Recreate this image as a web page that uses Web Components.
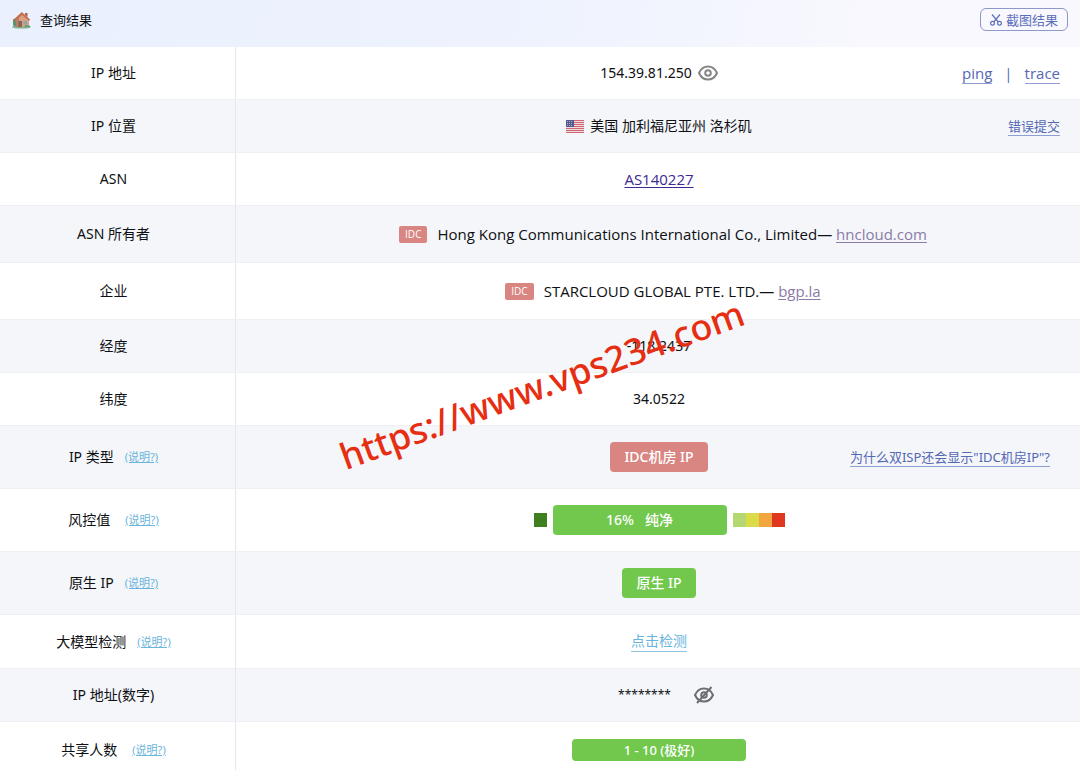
<!DOCTYPE html>
<html lang="zh-CN">
<head>
<meta charset="utf-8">
<meta name="viewport" content="width=device-width, initial-scale=1">
<title>查询结果</title>
<style>
  body { margin: 0; background: #fff; color: #0e1013; font: 15px/22px "Noto Sans", "Noto Sans CJK SC", sans-serif; }
</style>
</head>
<body>
<result-page></result-page>

<template id="t-page">
  <style>
    :host { display: block; position: relative; height: 100vh; overflow: hidden; }
  </style>
  <result-header></result-header>
  <result-table></result-table>
  <water-mark>https://www.vps234.com</water-mark>
</template>

<template id="t-header">
  <style>
    :host { display: flex; align-items: center; justify-content: space-between; height: 47px; box-sizing: border-box; padding: 0 12px 8px; background: linear-gradient(100deg, #ebf0fe 0%, #edf2fe 45%, #f8f8fe 80%, #f9f8fe 100%); }
    h1 { display: flex; align-items: center; gap: 9px; margin: 0; font-size: 13px; font-weight: 400; line-height: 20px; }
    svg { display: block; }
    button { display: flex; align-items: center; gap: 4px; height: 23px; padding: 0 9px; border: 1px solid #8d99c9; border-radius: 6px; background: transparent; color: #5c6fba; font: inherit; font-size: 13px; line-height: 20px; }
  </style>
  <h1>
    <svg width="19" height="18" viewBox="0 0 19 18" aria-hidden="true">
      <ellipse cx="9.500" cy="16" rx="9.500" ry="1.600" fill="#7fb08c"/>
      <path d="M1 14V8.500a2.500 2.500 0 0 1 4 0V15H2z" fill="#5f8f6b"/>
      <path d="M4 8 10.500 2.500 17 8v8H4z" fill="#d9a184"/>
      <path d="M4 8 7 5.500V16H4z" fill="#b97f68"/>
      <path d="M13 2h2.500v4L13 4z" fill="#a9624d"/>
      <path d="M1.500 8.700 9.800 1 18.300 8.700l-1.300 1L10.200 4 3 10z" fill="#c4704f"/>
      <path d="M6.500 10H10v6H6.500z" fill="#86664f"/>
      <path d="M11.500 10H15v3.500h-3.500z" fill="#8fa5a8"/>
      <path d="M12.500 16c0-2 2-2.500 3.300-1.500 1.500-.6 2.200.5 2.200 1.500z" fill="#5f9f74"/>
    </svg>
    查询结果
  </h1>
  <button type="button">
    <svg width="12" height="12" viewBox="0 0 12 12" fill="none" stroke="currentColor" stroke-width="1.200" aria-hidden="true">
      <path d="M2 .5 8.300 8M10 .5 3.700 8"/><circle cx="2.500" cy="9.300" r="1.900"/><circle cx="9.500" cy="9.300" r="1.900"/>
    </svg>
    截图结果
  </button>
</template>

<template id="t-table">
  <style>
    :host { display: block; }
    table { width: 100%; border-collapse: separate; border-spacing: 0; table-layout: fixed; }
    .c-label { width: 236px; }
    tr { height: 53px; }
    tr.t { height: 54px; }
    tr.m { height: 57px; }
    tr.l { height: 63px; }
    tr:nth-child(even) { background: #f4f6fa; }
    th, td { box-sizing: border-box; padding: 0; font-weight: 400; border-bottom: 1px solid #eef0f4; text-align: center; white-space: nowrap; }
    th { padding-right: 8px; border-right: 1px solid #e5e7ec; }
    .label { display: flex; align-items: center; justify-content: center; gap: 11px; font-size: 14px; }
    .label.wide { gap: 15px; }
    .latin { font-family: "Open Sans", sans-serif; line-height: 20px; }
    .as { color: #3a2a94; }
    .site { color: #8b7ba6; }
    a { text-underline-offset: 2px; }
    .side { color: #5468b4; text-decoration: none; border-bottom: 1px solid #8f9fd4; line-height: 20px; display: block; }
    .links { display: flex; gap: 12px; }
    .small { font-size: 13px; line-height: 18px; }
    .check { color: #68b4da; font-size: 14px; text-decoration: none; border-bottom: 1px solid #8cc4e2; display: block; line-height: 20px; }
    .cn { font-size: 14px; }
    .sep { color: #5468b4; }
    .stars { margin: 0 17px 0 14px; font-size: 12px; }
  </style>
  <table aria-label="查询结果">
    <colgroup><col class="c-label"><col></colgroup>
    <tbody>
      <tr><th scope="row"><div class="label">IP 地址</div></th>
        <td><value-line><span class="cn">154.39.81.250</span><eye-icon></eye-icon>
          <span slot="side" class="links latin"><a class="side" href="#ping">ping</a><span class="sep">|</span><a class="side" href="#trace">trace</a></span></value-line></td></tr>
      <tr><th scope="row"><div class="label">IP 位置</div></th>
        <td><value-line><us-flag></us-flag><span class="cn">美国 加利福尼亚州 洛杉矶</span>
          <a slot="side" class="side small" href="#report">错误提交</a></value-line></td></tr>
      <tr><th scope="row"><div class="label">ASN</div></th>
        <td><value-line><a class="as latin" href="#as">AS140227</a></value-line></td></tr>
      <tr class="m"><th scope="row"><div class="label">ASN 所有者</div></th>
        <td><value-line><idc-tag>IDC</idc-tag><span class="latin">Hong Kong Communications International Co., Limited— <a class="site" href="#hncloud">hncloud.com</a></span></value-line></td></tr>
      <tr class="m"><th scope="row"><div class="label">企业</div></th>
        <td><value-line><idc-tag>IDC</idc-tag><span class="latin">STARCLOUD GLOBAL PTE. LTD.— <a class="site" href="#bgp">bgp.la</a></span></value-line></td></tr>
      <tr><th scope="row"><div class="label">经度</div></th>
        <td><value-line><span class="cn">-118.2437</span></value-line></td></tr>
      <tr><th scope="row"><div class="label">纬度</div></th>
        <td><value-line><span class="cn">34.0522</span></value-line></td></tr>
      <tr class="l"><th scope="row"><div class="label">IP 类型 <help-link></help-link></div></th>
        <td><value-line inset><status-badge tone="red">IDC机房 IP</status-badge>
          <a slot="side" class="side small" href="#dual">为什么双ISP还会显示"IDC机房IP"?</a></value-line></td></tr>
      <tr class="l"><th scope="row"><div class="label wide">风控值 <help-link></help-link></div></th>
        <td><value-line><risk-scale>16%&nbsp;&nbsp; 纯净</risk-scale></value-line></td></tr>
      <tr class="l"><th scope="row"><div class="label">原生 IP <help-link></help-link></div></th>
        <td><value-line><status-badge>原生 IP</status-badge></value-line></td></tr>
      <tr class="t"><th scope="row"><div class="label">大模型检测 <help-link></help-link></div></th>
        <td><value-line><a class="check" href="#check">点击检测</a></value-line></td></tr>
      <tr><th scope="row"><div class="label">IP 地址(数字)</div></th>
        <td><value-line><span class="stars">********</span><eye-icon off></eye-icon></value-line></td></tr>
      <tr class="m"><th scope="row"><div class="label wide">共享人数 <help-link></help-link></div></th>
        <td><value-line><status-badge wide slim>1 - 10 (极好)</status-badge></value-line></td></tr>
    </tbody>
  </table>
</template>

<template id="t-value">
  <style>
    :host { display: grid; grid-template-columns: 1fr auto 1fr; align-items: center; padding: 0 20px 0 22px; }
    :host([inset]) { padding: 0 30px 0 32px; }
    .main { grid-column: 2; display: flex; align-items: center; gap: 6px; }
    .side { justify-self: end; }
  </style>
  <div class="main"><slot></slot></div>
  <div class="side"><slot name="side"></slot></div>
</template>

<template id="t-badge">
  <style>
    :host { display: block; box-sizing: border-box; padding: 4px 14px; border-radius: 4px; background: #71c84c; color: #fff; font-size: 14px; line-height: 22px; font-weight: 500; text-align: center; }
    :host([tone="red"]) { background: #d98682; }
    :host([wide]) { width: 174px; }
    :host([slim]) { padding: 0; font-size: 13px; }
  </style>
  <slot></slot>
</template>

<template id="t-risk">
  <style>
    :host { display: flex; align-items: center; gap: 6px; }
    .steps { display: flex; }
    i { width: 13px; height: 14px; background: var(--c); }
  </style>
  <div class="steps"><i style="--c:#3f7f22"></i></div>
  <status-badge wide><slot></slot></status-badge>
  <div class="steps"><i style="--c:#b5d772"></i><i style="--c:#dbdb48"></i><i style="--c:#f1a63f"></i><i style="--c:#e0371f"></i></div>
</template>

<template id="t-tag">
  <style>
    :host { display: block; margin: 0 4px 0 8px; padding: 0 6px; border-radius: 2px; background: #d98682; color: #fff; font-family: "Open Sans", sans-serif; font-size: 10px; line-height: 17px; }
  </style>
  <slot></slot>
</template>

<template id="t-help">
  <style>
    :host { display: block; font-size: 11px; line-height: 16px; }
    a { color: #6bb5dc; text-underline-offset: 1px; }
  </style>
  <a href="#help">(说明?)</a>
</template>

<template id="t-eye">
  <style>
    :host { display: block; color: #858585; }
    svg { display: block; }
    .slash { display: none; }
    :host([off]) .slash { display: inline; }
    :host([off]) { color: #6d6f73; }
  </style>
  <svg width="20" height="18" viewBox="0 0 20 18" fill="none" stroke="currentColor" stroke-width="2" aria-hidden="true">
    <path d="M1 9C3 4.500 6.200 2.500 10 2.500S17 4.500 19 9c-2 4.500-5.200 6.500-9 6.500S3 13.500 1 9z"/>
    <circle cx="10" cy="9" r="2.800"/>
    <path class="slash" d="M3 17 17.500 1"/>
  </svg>
</template>

<template id="t-flag">
  <style>
    :host { display: block; }
    svg { display: block; }
  </style>
  <svg width="18" height="13" viewBox="0 0 18 13" aria-label="US" role="img">
    <path d="M0 0h18v13H0z" fill="#ecdcdf"/>
    <path d="M0 .5h18M0 2.500h18M0 4.500h18M0 6.500h18M0 8.500h18M0 10.500h18M0 12.500h18" stroke="#cf6672"/>
    <path d="M0 0h8v7H0z" fill="#555c8b"/>
    <path d="M1 1.500h6M1 3.500h6M1 5.500h6" stroke="#a5a9c6" stroke-dasharray="1 1"/>
  </svg>
</template>

<template id="t-mark">
  <style>
    :host { position: absolute; left: 50%; top: 385px; margin-left: 2px; transform: translate(-50%, -50%) rotate(-20deg); color: #e62e12; font-size: 36px; font-weight: 500; line-height: 48px; white-space: nowrap; pointer-events: none; }
  </style>
  <slot></slot>
</template>

<script>
  const define = (name, templateId) => customElements.define(name, class extends HTMLElement {
    constructor() {
      super();
      this.attachShadow({ mode: 'open' })
        .append(document.getElementById(templateId).content.cloneNode(true));
    }
  });
  define('value-line', 't-value');
  define('status-badge', 't-badge');
  define('risk-scale', 't-risk');
  define('idc-tag', 't-tag');
  define('help-link', 't-help');
  define('eye-icon', 't-eye');
  define('us-flag', 't-flag');
  define('water-mark', 't-mark');
  define('result-header', 't-header');
  define('result-table', 't-table');
  define('result-page', 't-page');
</script>
</body>
</html>
